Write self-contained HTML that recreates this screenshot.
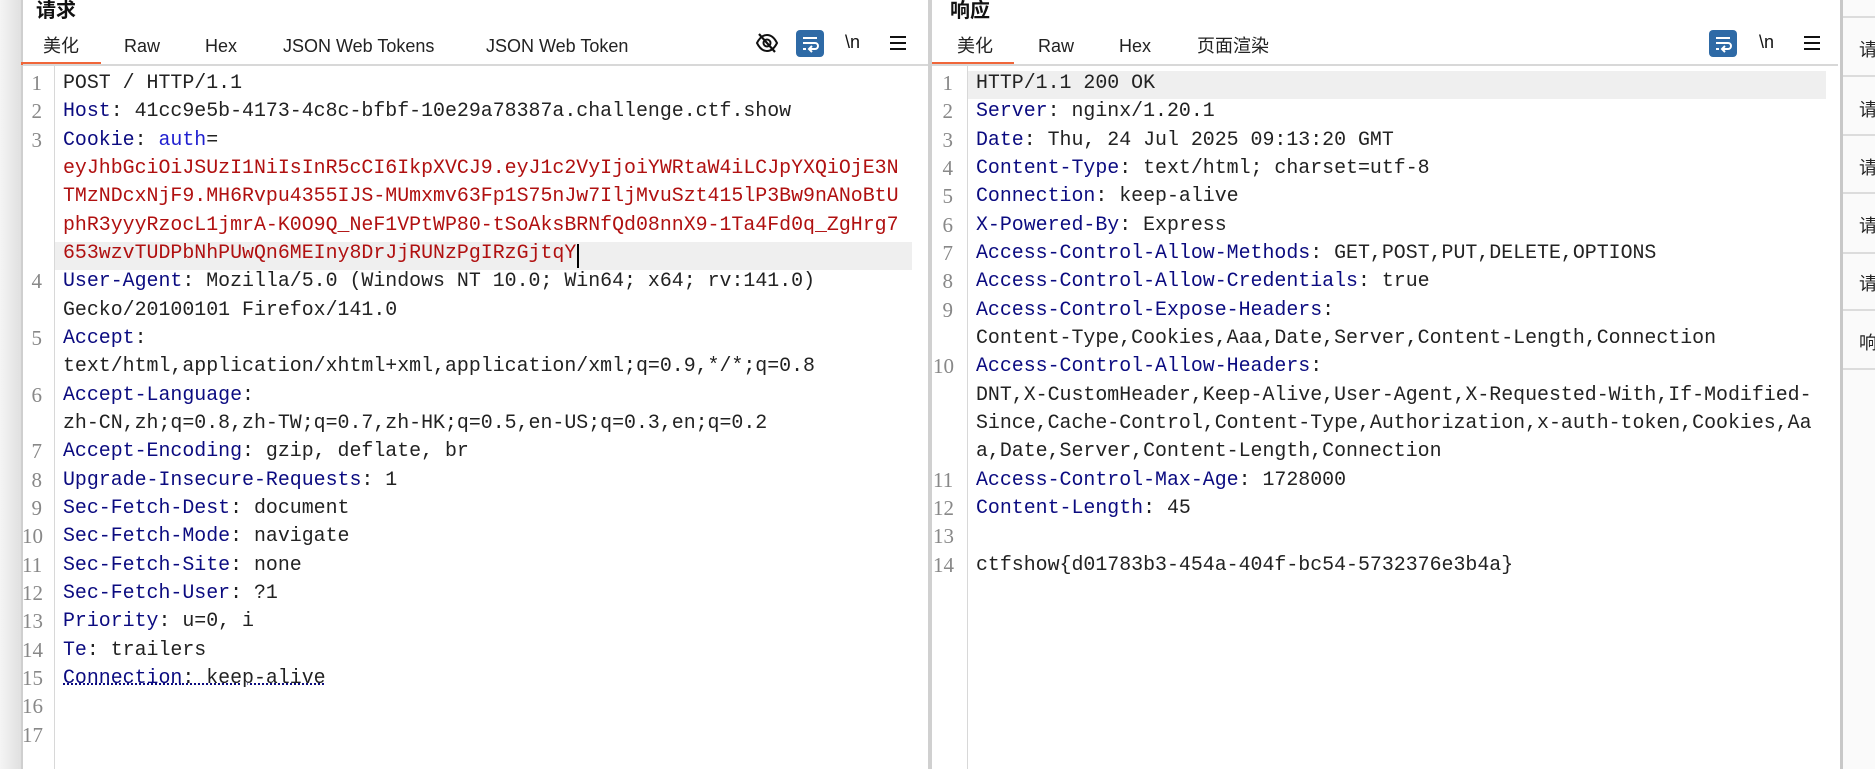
<!DOCTYPE html>
<html><head><meta charset="utf-8"><style>
*{margin:0;padding:0;box-sizing:border-box}
body{width:1875px;height:769px;overflow:hidden;background:#fff;position:relative;font-family:"Liberation Sans","Noto Sans CJK SC",sans-serif}
.abs{position:absolute}
.title{font-weight:bold;font-size:20px;top:-6px;color:#111}
.tab{font-size:18px;color:#222;top:34px;height:24px;line-height:24px;position:absolute}
.row{position:absolute;white-space:pre;font-family:"Liberation Mono","Noto Sans CJK SC",monospace;font-size:19.9px;line-height:28px;height:28px;color:#222}
.num{position:absolute;font-family:"Liberation Serif",serif;font-size:21px;color:#888;line-height:28px;height:28px;width:20px;text-align:right}
.k{color:#0b0b80}.b{color:#1f1fd0}.r{color:#b01010}
.hl{position:absolute;background:#efefef;height:28px}
.side{position:absolute;left:1840px;width:35px;background:#fafafa;border-left:3px solid #c8c8c8;top:0;height:769px}
.sep{position:absolute;left:0;width:35px;height:2px;background:#dcdcdc}
.sc{position:absolute;left:16px;font-size:18px;color:#222}
</style></head><body>
<div class="abs" style="left:0;top:0;width:21px;height:769px;background:linear-gradient(90deg,#f4f4f4,#e0e0e0)"></div>
<div class="abs" style="left:21px;top:0;width:2px;height:769px;background:#cfcfcf"></div>
<div class="abs" style="left:928px;top:0;width:4px;height:769px;background:#d0d0d0"></div>
<!-- left header -->
<div class="abs title" style="left:36px">请求</div>
<div class="tab" style="left:43px">美化</div>
<div class="tab" style="left:124px">Raw</div>
<div class="tab" style="left:205px">Hex</div>
<div class="tab" style="left:283px">JSON Web Tokens</div>
<div class="tab" style="left:486px">JSON Web Token</div>
<div class="abs" style="left:21px;top:62px;width:80px;height:3px;background:#f0663a"></div>
<div class="abs" style="left:23px;top:64px;width:905px;height:2px;background:#d8d8d8"></div>
<svg class="abs" style="left:755px;top:32px" width="24" height="22" viewBox="0 0 24 22"><path d="M2 11C5 5 9 3 12 3s7 2 10 8c-3 6-7 8-10 8S5 17 2 11z" fill="none" stroke="#111" stroke-width="2"/><circle cx="12" cy="11" r="3.5" fill="none" stroke="#111" stroke-width="2"/><path d="M4 2L20 20" stroke="#111" stroke-width="2.2"/></svg>
<svg class="abs" style="left:796px;top:30px" width="28" height="27" viewBox="0 0 28 27"><rect width="28" height="27" rx="4" fill="#2e6aa6"/><path d="M7 8h14M7 13h12a3 3 0 010 6h-5M7 19h3" stroke="#fff" stroke-width="2" fill="none"/><path d="M16 16l-3 3 3 3" stroke="#fff" stroke-width="2" fill="none"/></svg>
<div class="abs" style="left:845px;top:32px;font-size:18px;color:#111">\n</div>
<svg class="abs" style="left:889px;top:35px" width="18" height="16"><path d="M1 2h16M1 8h16M1 14h16" stroke="#111" stroke-width="2"/></svg>
<div class="abs" style="left:54px;top:66px;width:1px;height:703px;background:#d8d8d8"></div>
<!-- right header -->
<div class="abs title" style="left:950px">响应</div>
<div class="tab" style="left:957px">美化</div>
<div class="tab" style="left:1038px">Raw</div>
<div class="tab" style="left:1119px">Hex</div>
<div class="tab" style="left:1197px">页面渲染</div>
<div class="abs" style="left:932px;top:62px;width:82px;height:3px;background:#f0663a"></div>
<div class="abs" style="left:932px;top:64px;width:906px;height:2px;background:#d8d8d8"></div>
<svg class="abs" style="left:1709px;top:30px" width="28" height="27" viewBox="0 0 28 27"><rect width="28" height="27" rx="4" fill="#2e6aa6"/><path d="M7 8h14M7 13h12a3 3 0 010 6h-5M7 19h3" stroke="#fff" stroke-width="2" fill="none"/><path d="M16 16l-3 3 3 3" stroke="#fff" stroke-width="2" fill="none"/></svg>
<div class="abs" style="left:1759px;top:32px;font-size:18px;color:#111">\n</div>
<svg class="abs" style="left:1803px;top:35px" width="18" height="16"><path d="M1 2h16M1 8h16M1 14h16" stroke="#111" stroke-width="2"/></svg>
<div class="abs" style="left:967px;top:66px;width:1px;height:703px;background:#d8d8d8"></div>
<!-- highlights -->
<div class="hl" style="left:55px;top:242px;width:857px"></div>
<div class="hl" style="left:968px;top:71px;width:858px"></div>
<div class="abs" style="left:577px;top:244px;width:2px;height:24px;background:#000"></div>

<!-- left content -->
<div class="num" style="left:22px;top:69px">1</div><div class="row" style="left:63px;top:69px">POST / HTTP/1.1</div>
<div class="num" style="left:22px;top:97px">2</div><div class="row" style="left:63px;top:97px"><span class="k">Host</span>: 41cc9e5b-4173-4c8c-bfbf-10e29a78387a.challenge.ctf.show</div>
<div class="num" style="left:22px;top:126px">3</div><div class="row" style="left:63px;top:126px"><span class="k">Cookie</span>: <span class="b">auth</span>=</div>
<div class="row r" style="left:63px;top:154px">eyJhbGciOiJSUzI1NiIsInR5cCI6IkpXVCJ9.eyJ1c2VyIjoiYWRtaW4iLCJpYXQiOjE3N</div>
<div class="row r" style="left:63px;top:182px">TMzNDcxNjF9.MH6Rvpu4355IJS-MUmxmv63Fp1S75nJw7IljMvuSzt415lP3Bw9nANoBtU</div>
<div class="row r" style="left:63px;top:211px">phR3yyyRzocL1jmrA-K0O9Q_NeF1VPtWP80-tSoAksBRNfQd08nnX9-1Ta4Fd0q_ZgHrg7</div>
<div class="row r" style="left:63px;top:239px">653wzvTUDPbNhPUwQn6MEIny8DrJjRUNzPgIRzGjtqY</div>
<div class="num" style="left:22px;top:267px">4</div><div class="row" style="left:63px;top:267px"><span class="k">User-Agent</span>: Mozilla/5.0 (Windows NT 10.0; Win64; x64; rv:141.0)</div>
<div class="row" style="left:63px;top:296px">Gecko/20100101 Firefox/141.0</div>
<div class="num" style="left:22px;top:324px">5</div><div class="row" style="left:63px;top:324px"><span class="k">Accept</span>:</div>
<div class="row" style="left:63px;top:352px">text/html,application/xhtml+xml,application/xml;q=0.9,*/*;q=0.8</div>
<div class="num" style="left:22px;top:381px">6</div><div class="row" style="left:63px;top:381px"><span class="k">Accept-Language</span>:</div>
<div class="row" style="left:63px;top:409px">zh-CN,zh;q=0.8,zh-TW;q=0.7,zh-HK;q=0.5,en-US;q=0.3,en;q=0.2</div>
<div class="num" style="left:22px;top:437px">7</div><div class="row" style="left:63px;top:437px"><span class="k">Accept-Encoding</span>: gzip, deflate, br</div>
<div class="num" style="left:22px;top:466px">8</div><div class="row" style="left:63px;top:466px"><span class="k">Upgrade-Insecure-Requests</span>: 1</div>
<div class="num" style="left:22px;top:494px">9</div><div class="row" style="left:63px;top:494px"><span class="k">Sec-Fetch-Dest</span>: document</div>
<div class="num" style="left:22px;top:522px">10</div><div class="row" style="left:63px;top:522px"><span class="k">Sec-Fetch-Mode</span>: navigate</div>
<div class="num" style="left:22px;top:551px">11</div><div class="row" style="left:63px;top:551px"><span class="k">Sec-Fetch-Site</span>: none</div>
<div class="num" style="left:22px;top:579px">12</div><div class="row" style="left:63px;top:579px"><span class="k">Sec-Fetch-User</span>: ?1</div>
<div class="num" style="left:22px;top:607px">13</div><div class="row" style="left:63px;top:607px"><span class="k">Priority</span>: u=0, i</div>
<div class="num" style="left:22px;top:636px">14</div><div class="row" style="left:63px;top:636px"><span class="k">Te</span>: trailers</div>
<div class="num" style="left:22px;top:664px">15</div><div class="row" style="left:63px;top:664px;text-decoration:underline dotted #0b0b80"><span class="k">Connection</span>: keep-alive</div>
<div class="num" style="left:22px;top:692px">16</div>
<div class="num" style="left:22px;top:721px">17</div>

<!-- right content -->
<div class="num" style="left:933px;top:69px">1</div><div class="row" style="left:976px;top:69px">HTTP/1.1 200 OK</div>
<div class="num" style="left:933px;top:97px">2</div><div class="row" style="left:976px;top:97px"><span class="k">Server</span>: nginx/1.20.1</div>
<div class="num" style="left:933px;top:126px">3</div><div class="row" style="left:976px;top:126px"><span class="k">Date</span>: Thu, 24 Jul 2025 09:13:20 GMT</div>
<div class="num" style="left:933px;top:154px">4</div><div class="row" style="left:976px;top:154px"><span class="k">Content-Type</span>: text/html; charset=utf-8</div>
<div class="num" style="left:933px;top:182px">5</div><div class="row" style="left:976px;top:182px"><span class="k">Connection</span>: keep-alive</div>
<div class="num" style="left:933px;top:211px">6</div><div class="row" style="left:976px;top:211px"><span class="k">X-Powered-By</span>: Express</div>
<div class="num" style="left:933px;top:239px">7</div><div class="row" style="left:976px;top:239px"><span class="k">Access-Control-Allow-Methods</span>: GET,POST,PUT,DELETE,OPTIONS</div>
<div class="num" style="left:933px;top:267px">8</div><div class="row" style="left:976px;top:267px"><span class="k">Access-Control-Allow-Credentials</span>: true</div>
<div class="num" style="left:933px;top:296px">9</div><div class="row" style="left:976px;top:296px"><span class="k">Access-Control-Expose-Headers</span>:</div>
<div class="row" style="left:976px;top:324px">Content-Type,Cookies,Aaa,Date,Server,Content-Length,Connection</div>
<div class="num" style="left:933px;top:352px">10</div><div class="row" style="left:976px;top:352px"><span class="k">Access-Control-Allow-Headers</span>:</div>
<div class="row" style="left:976px;top:381px">DNT,X-CustomHeader,Keep-Alive,User-Agent,X-Requested-With,If-Modified-</div>
<div class="row" style="left:976px;top:409px">Since,Cache-Control,Content-Type,Authorization,x-auth-token,Cookies,Aa</div>
<div class="row" style="left:976px;top:437px">a,Date,Server,Content-Length,Connection</div>
<div class="num" style="left:933px;top:466px">11</div><div class="row" style="left:976px;top:466px"><span class="k">Access-Control-Max-Age</span>: 1728000</div>
<div class="num" style="left:933px;top:494px">12</div><div class="row" style="left:976px;top:494px"><span class="k">Content-Length</span>: 45</div>
<div class="num" style="left:933px;top:522px">13</div>
<div class="num" style="left:933px;top:551px">14</div><div class="row" style="left:976px;top:551px">ctfshow{d01783b3-454a-404f-bc54-5732376e3b4a}</div>

<!-- side strip -->
<div class="side">
<div class="sep" style="top:16px"></div>
<div class="sc" style="top:36px">请</div>
<div class="sep" style="top:75px"></div>
<div class="sc" style="top:96px">请</div>
<div class="sep" style="top:134px"></div>
<div class="sc" style="top:154px">请</div>
<div class="sep" style="top:192px"></div>
<div class="sc" style="top:212px">请</div>
<div class="sep" style="top:252px"></div>
<div class="sc" style="top:270px">请</div>
<div class="sep" style="top:309px"></div>
<div class="sc" style="top:329px">响</div>
<div class="sep" style="top:368px"></div>
</div>
</body></html>
